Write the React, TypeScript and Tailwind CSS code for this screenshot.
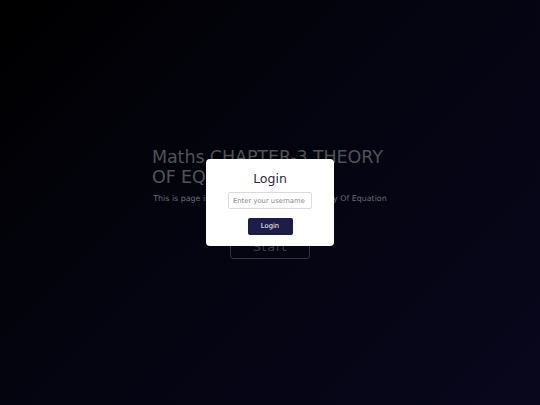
import React from 'react';

const App = () => {
  return (
    <div
      className="relative w-full h-[405px] overflow-hidden bg-[linear-gradient(135deg,#000000_0%,#040410_45%,#08071c_100%)] flex items-center justify-center"
      style={{ fontFamily: '"DejaVu Sans", "Open Sans", sans-serif' }}
    >
      {/* Hero (dimmed behind modal) */}
      <div className="w-[236px] flex flex-col">
        <h1 className="text-[17.5px] leading-[20px] font-medium text-[#515157] tracking-[-0.1px]">
          Maths CHAPTER-3 THEORY OF EQUATION
        </h1>
        <p className="mt-[7px] text-[7.9px] leading-[10px] text-[#6a6a72] text-center whitespace-nowrap">
          This is page is about Maths CHAPTER-3 Theory Of Equation
        </p>
        <div className="mt-[31px] flex justify-center">
          <button className="w-[80px] h-[24px] rounded-[3px] border border-[#34343e] text-[13px] leading-none text-[#3e3e46] tracking-[0.5px] bg-transparent">
            Start
          </button>
        </div>
      </div>

      {/* Modal */}
      <div className="absolute inset-0 flex items-center justify-center">
        <div className="w-[128px] h-[87px] bg-white rounded-[4px] flex flex-col items-center pt-[12px]">
          <h2 className="text-[12.5px] leading-[16px] font-medium text-[#2a2950]">Login</h2>
          <input
            placeholder="Enter your username"
            className="mt-[5px] w-[84px] h-[17px] border border-[#dcdcdc] rounded-[2px] px-[4px] text-[6.8px] text-[#333] placeholder:text-[#8a8a8a] outline-none"
          />
          <button className="mt-[9px] w-[45px] h-[17px] rounded-[2px] bg-[#1e1c48] text-white text-[6.8px] leading-none">
            Login
          </button>
        </div>
      </div>
    </div>
  );
};

export default App;
